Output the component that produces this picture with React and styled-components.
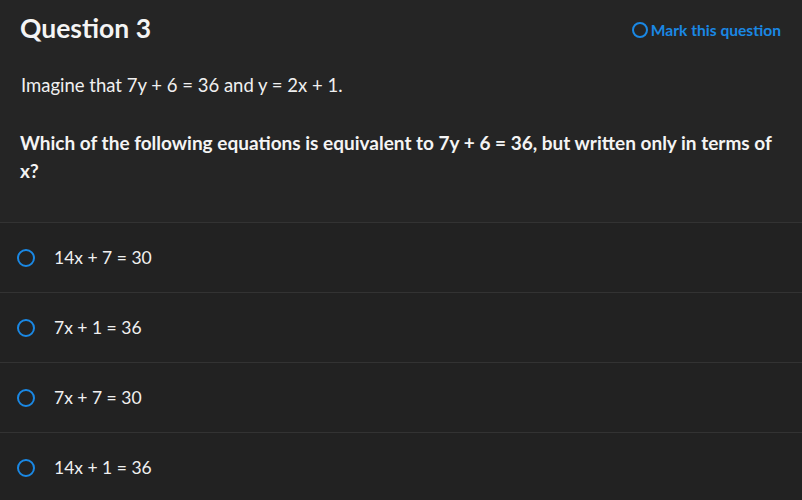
import React from "react"
import styled, { createGlobalStyle } from "styled-components"

const GlobalStyle = createGlobalStyle`
  html, body {
    margin: 0;
    padding: 0;
    background: #252525;
  }
  body {
    font-family: Lato, "Open Sans", sans-serif;
    color: #f2f2f2;
  }
`

const options = ["14x + 7 = 30", "7x + 1 = 36", "7x + 7 = 30", "14x + 1 = 36"]

const App = () => {
  return (
    <>
      <GlobalStyle />
      <Page>
        <Header>
          <Title>Question 3</Title>
          <MarkButton>
            <Ring size={16} />
            Mark this question
          </MarkButton>
        </Header>
        <Stem>Imagine that 7y + 6 = 36 and y = 2x + 1.</Stem>
        <Prompt>
          Which of the following equations is equivalent to 7y + 6 = 36, but
          written only in terms of x?
        </Prompt>
        <OptionList>
          {options.map((opt) => (
            <Option key={opt}>
              <Ring size={18} />
              <OptionText>{opt}</OptionText>
            </Option>
          ))}
        </OptionList>
      </Page>
    </>
  )
}

export default App

const Page = styled.div`
  width: 802px;
  height: 500px;
  overflow: hidden;
  background: #252525;
`

const Header = styled.div`
  display: flex;
  justify-content: space-between;
  align-items: center;
  padding: 12px 21px 0 20px;
  height: 32px;
`

const Title = styled.h2`
  margin: 0;
  font-size: 26.5px;
  line-height: 32px;
  font-weight: 700;
  color: #f4f4f4;
`

const MarkButton = styled.button`
  display: flex;
  align-items: center;
  gap: 3px;
  margin-top: 4px;
  background: none;
  border: 0;
  padding: 0;
  font-family: Lato, sans-serif;
  font-size: 15.6px;
  font-weight: 700;
  color: #1a88e4;
  cursor: pointer;
`

const Ring = styled.span`
  display: inline-block;
  box-sizing: border-box;
  width: ${(p) => p.size}px;
  height: ${(p) => p.size}px;
  border: 2px solid #1a88e4;
  border-radius: 50%;
  flex-shrink: 0;
`

const Stem = styled.p`
  margin: 27px 20px 0 21px;
  font-size: 18.5px;
  line-height: 28px;
  color: #f0f0f0;
`

const Prompt = styled.p`
  margin: 30px 20px 0;
  font-size: 19px;
  font-weight: 700;
  line-height: 28px;
  color: #f4f4f4;
`

const OptionList = styled.div`
  margin-top: 37px;
  border-top: 1px solid #333;
`

const Option = styled.div`
  display: flex;
  align-items: center;
  gap: 19px;
  height: 69px;
  padding-left: 17px;
  background: #222;
  border-bottom: 1px solid #333;
`

const OptionText = styled.span`
  font-size: 17.5px;
  color: #f0f0f0;
`
